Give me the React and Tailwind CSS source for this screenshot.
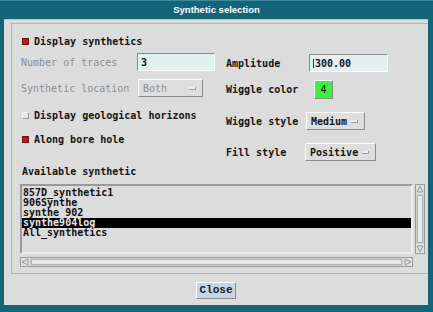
import React from 'react';

const mono = { fontFamily: '"DejaVu Sans Mono", "Liberation Mono", monospace' };

const raised = 'border border-t-white border-l-white border-b-[#8a8a8a] border-r-[#8a8a8a]';
const inset = 'border border-t-[#8a8a8a] border-l-[#8a8a8a] border-b-white border-r-white';

const Check = ({ on }) => (
  <span
    className={`inline-block w-[7px] h-[7px] mr-[5px] ${
      on ? 'bg-[#b41c1c] border border-[#7a1010]' : 'bg-[#e8e8e8] border border-t-[#f4f4f4] border-l-[#f4f4f4] border-b-[#9a9a9a] border-r-[#9a9a9a]'
    }`}
  />
);

const Indicator = () => (
  <span className="inline-block w-[7px] h-[3px] bg-[#eeeeee] border-b border-r border-[#9a9a9a]" />
);

const OptionMenu = ({ label, width, disabled }) => (
  <div
    className={`flex items-center justify-between h-[18px] pl-[4px] pr-[6px] bg-[#dedede] ${raised} ${
      disabled ? 'text-[#8e8e8e] font-normal' : 'text-[#161616]'
    }`}
    style={{ width }}
  >
    <span>{label}</span>
    <Indicator />
  </div>
);

const items = ['857D_synthetic1', '906Synthe', 'synthe 902', 'synthe904log', 'All_synthetics'];

export default function App() {
  return (
    <div className="w-[433px] h-[312px] bg-[#14657a] flex flex-col overflow-hidden" style={mono}>
      {/* title bar */}
      <div
        className="h-[19px] flex items-center justify-center text-white font-bold text-[9.5px] border-t border-[#3d8a9c]"
        style={{ fontFamily: '"Liberation Sans", Arial, sans-serif' }}
      >
        Synthetic selection
      </div>

      {/* body */}
      <div className="flex-1 ml-[4px] mr-[5px] mb-[7px] bg-[#dcdcdc] border-t border-[#c4c4c4] flex flex-col pt-[3px] pl-[7px]">
        <div className="h-[251px] border-t border-l border-b border-[#b4b4b4] pl-[9px] text-[10px] font-bold text-[#161616]">
          {/* display synthetics */}
          <div className="flex items-center h-[16px] mt-[9px] pl-[1px]">
            <Check on />
            <span>Display synthetics</span>
          </div>

          <div className="flex">
            {/* left column */}
            <div className="w-[205px] pt-[2px]">
              <div className="flex items-center h-[22px] text-[#8e8e8e] font-normal">
                <span className="w-[116px]">Number of traces</span>
                <div className={`w-[78px] h-[18px] bg-[#e2f1ef] ${inset} pl-[3px] flex items-center text-[#161616] font-bold`}>3</div>
              </div>
              <div className="flex items-center h-[22px] mt-[4px] text-[#8e8e8e] font-normal">
                <span className="w-[117px]">Synthetic location</span>
                <OptionMenu label="Both" width={65} disabled />
              </div>
              <div className="flex items-center h-[22px] mt-[5px] pl-[1px]">
                <Check />
                <span>Display geological horizons</span>
              </div>
              <div className="flex items-center h-[22px] mt-[2px] pl-[1px]">
                <Check on />
                <span>Along bore hole</span>
              </div>
            </div>

            {/* right column */}
            <div className="pt-[3px]">
              <div className="flex items-center h-[22px]">
                <span className="w-[83px]">Amplitude</span>
                <div className={`w-[79px] h-[18px] bg-[#e2f1ef] ${inset} pl-[3px] flex items-center`}>
                  <span className="inline-block w-px h-[9px] bg-[#333] mr-[1px]" />
                  300.00
                </div>
              </div>
              <div className="flex items-center h-[22px] mt-[4px]">
                <span className="w-[88px]">Wiggle color</span>
                <div className={`w-[19px] h-[19px] bg-[#3df03d] ${raised} flex items-center justify-center font-normal`}>4</div>
              </div>
              <div className="flex items-center h-[22px] mt-[10px]">
                <span className="w-[80px]">Wiggle style</span>
                <OptionMenu label="Medium" width={59} />
              </div>
              <div className="flex items-center h-[22px] mt-[9px]">
                <span className="w-[79px]">Fill style</span>
                <OptionMenu label="Positive" width={71} />
              </div>
            </div>
          </div>

          <div className="h-[14px] flex items-center mt-[1px] pl-[1px]">Available synthetic</div>

          {/* list + scrollbars */}
          <div className="flex mt-[6px] ml-[-1px]">
            <div className="w-[393px] h-[70px] bg-[#dcdcdc] border-2 border-t-[#9a9a9a] border-l-[#9a9a9a] border-b-[#eeeeee] border-r-[#eeeeee] pt-[2px] leading-[10px] text-[10px]">
              {items.map((it, i) => (
                <div
                  key={it}
                  className={`pl-[1px] h-[10px] ${i === 3 ? 'bg-black text-[#e8e8e8]' : 'text-[#111]'}`}
                >
                  {it}
                </div>
              ))}
            </div>
            <div className="ml-[2px] w-[10px] h-[70px] bg-[#cfcfcf] border border-[#9a9a9a] flex flex-col justify-between items-center">
              <svg width="8" height="9" viewBox="0 0 8 9">
                <rect x="0" y="0" width="8" height="9" fill="#e0e0e0" />
                <path d="M4 1 L7 7 L1 7 Z" fill="none" stroke="#9a9a9a" strokeWidth="1" />
              </svg>
              <div className="flex-1 w-[6px] my-[1px] bg-[#e8e8e8] border border-[#b0b0b0]" />
              <svg width="8" height="9" viewBox="0 0 8 9">
                <rect x="0" y="0" width="8" height="9" fill="#e0e0e0" />
                <path d="M4 8 L7 2 L1 2 Z" fill="none" stroke="#9a9a9a" strokeWidth="1" />
              </svg>
            </div>
          </div>
          <div className="ml-[-1px] mt-[3px] w-[393px] h-[10px] bg-[#cfcfcf] border border-[#9a9a9a] flex items-center">
            <svg width="9" height="8" viewBox="0 0 9 8">
              <rect x="0" y="0" width="9" height="8" fill="#e0e0e0" />
              <path d="M1 4 L7 1 L7 7 Z" fill="none" stroke="#9a9a9a" strokeWidth="1" />
            </svg>
            <div className="flex-1 h-[6px] mx-[1px] bg-[#e8e8e8] border border-[#b0b0b0]" />
            <svg width="9" height="8" viewBox="0 0 9 8">
              <rect x="0" y="0" width="9" height="8" fill="#e0e0e0" />
              <path d="M8 4 L2 1 L2 7 Z" fill="none" stroke="#9a9a9a" strokeWidth="1" />
            </svg>
          </div>
        </div>

        {/* close */}
        <div className="flex justify-center mt-[8px] pr-[7px]">
          <div
            className={`w-[40px] h-[17px] bg-[#c6d4e6] ${raised} flex items-center justify-center font-bold text-[11px] text-[#1a1a2a]`}
            style={{ fontFamily: '"Liberation Mono", "Courier New", monospace' }}
          >
            Close
          </div>
        </div>
      </div>
    </div>
  );
}
